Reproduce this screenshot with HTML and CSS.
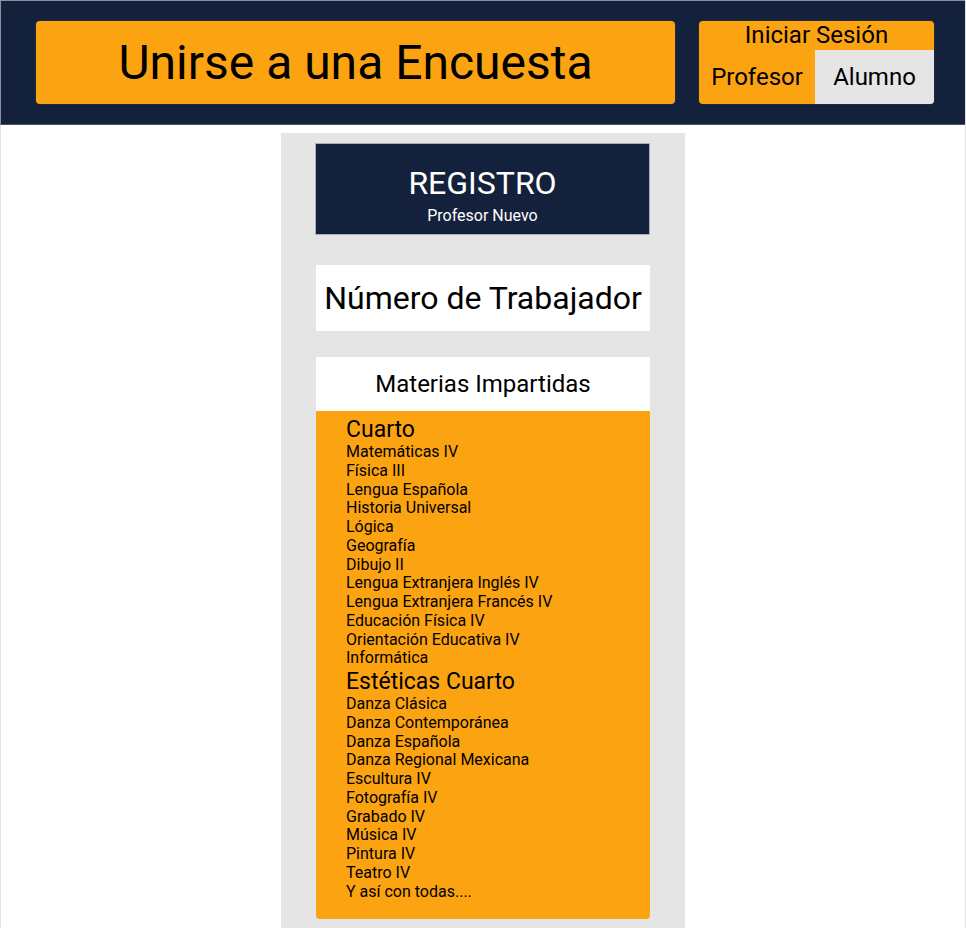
FILE: index.html
```html
<!DOCTYPE html>
<html lang="es">
<head>
<meta charset="utf-8">
<title>Registro Profesor</title>
<link rel="stylesheet" href="styles.css">
</head>
<body>
<div class="page">
  <header class="topbar">
    <a class="join-btn" href="#">Unirse a una Encuesta</a>
    <div class="login">
      <div class="login-title">Iniciar Sesión</div>
      <div class="login-options">
        <a class="opt opt-active" href="#">Profesor</a>
        <a class="opt opt-alt" href="#">Alumno</a>
      </div>
    </div>
  </header>
  <main class="panel">
    <section class="registro">
      <div class="registro-title">REGISTRO</div>
      <div class="registro-sub">Profesor Nuevo</div>
    </section>
    <div class="field">Número de Trabajador</div>
    <section class="materias">
      <div class="materias-head">Materias Impartidas</div>
      <div class="materias-list">
        <div class="group">Cuarto</div>
        <div class="item">Matemáticas IV</div>
        <div class="item">Física III</div>
        <div class="item">Lengua Española</div>
        <div class="item">Historia Universal</div>
        <div class="item">Lógica</div>
        <div class="item">Geografía</div>
        <div class="item">Dibujo II</div>
        <div class="item">Lengua Extranjera Inglés IV</div>
        <div class="item">Lengua Extranjera Francés IV</div>
        <div class="item">Educación Física IV</div>
        <div class="item">Orientación Educativa IV</div>
        <div class="item">Informática</div>
        <div class="group">Estéticas Cuarto</div>
        <div class="item">Danza Clásica</div>
        <div class="item">Danza Contemporánea</div>
        <div class="item">Danza Española</div>
        <div class="item">Danza Regional Mexicana</div>
        <div class="item">Escultura IV</div>
        <div class="item">Fotografía IV</div>
        <div class="item">Grabado IV</div>
        <div class="item">Música IV</div>
        <div class="item">Pintura IV</div>
        <div class="item">Teatro IV</div>
        <div class="item">Y así con todas....</div>
      </div>
    </section>
  </main>
</div>
</body>
</html>
```

FILE: styles.css
```css
* { box-sizing: border-box; }

html, body {
  margin: 0;
  padding: 0;
  background: #ffffff;
}

body {
  font-family: Roboto, "Liberation Sans", Arial, sans-serif;
  color: #000000;
}

a { color: inherit; text-decoration: none; }

.page {
  min-height: 100vh;
  border-left: 1px solid #e2e2e2;
  border-right: 1px solid #e2e2e2;
}

.topbar {
  display: flex;
  gap: 24px;
  height: 125px;
  padding: 20px 31px 20px 35px;
  background: #14213d;
  border-top: 1px solid #8a909c;
  border-bottom: 1px solid #4a5468;
  margin-left: -1px;
  border-left: 1px solid #8a909c;
}

.join-btn {
  width: 639px;
  height: 83px;
  display: flex;
  align-items: center;
  justify-content: center;
  background: #fca311;
  border-radius: 4px;
  box-shadow: 0 0 0 1px rgba(60, 60, 60, 0.35);
  font-size: 48px;
  color: #000;
}

.login {
  width: 235px;
  height: 83px;
  display: flex;
  flex-direction: column;
  background: #fca311;
  border-radius: 4px;
  box-shadow: 0 0 0 1px rgba(60, 60, 60, 0.35);
  overflow: hidden;
}

.login-title {
  height: 29px;
  display: flex;
  align-items: center;
  justify-content: center;
  font-size: 24px;
  padding-bottom: 2px;
}

.login-options {
  flex: 1;
  display: grid;
  grid-template-columns: 116px 1fr;
}

.opt {
  display: flex;
  align-items: center;
  justify-content: center;
  font-size: 24px;
}

.opt-alt {
  background: #e5e5e5;
}

.panel {
  width: 404px;
  margin: 8px auto 0;
  padding: 10px 35px 9px 34px;
  background: #e5e5e5;
  display: flex;
  flex-direction: column;
}

.registro {
  background: #14213d;
  border: 1px solid #a9adb6;
  color: #ffffff;
  text-align: center;
  padding: 21px 0 9px;
}

.registro-title {
  font-size: 32px;
  line-height: 36px;
  margin-bottom: 5px;
}

.registro-sub {
  font-size: 16px;
  line-height: 19px;
}

.field {
  margin-top: 30px;
  margin-left: 1px;
  height: 66px;
  background: #ffffff;
  display: flex;
  align-items: center;
  justify-content: center;
  font-size: 32px;
}

.materias {
  margin-top: 26px;
  margin-left: 1px;
}

.materias-head {
  height: 54px;
  background: #ffffff;
  display: flex;
  align-items: center;
  justify-content: center;
  font-size: 24px;
}

.materias-list {
  background: #fca311;
  border-radius: 0 0 4px 4px;
  padding: 5px 0 18px 30px;
}

.group {
  font-size: 23px;
  line-height: 27px;
}

.item {
  font-size: 16px;
  line-height: 18.75px;
}
```
